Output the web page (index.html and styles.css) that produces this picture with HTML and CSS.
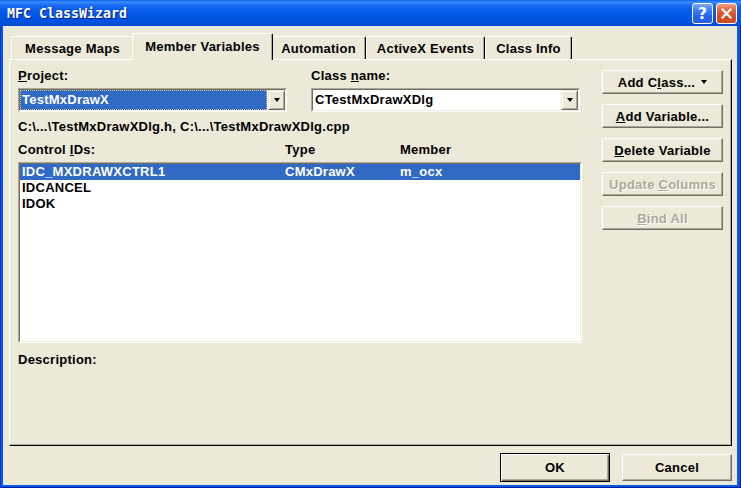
FILE: index.html
```html
<!DOCTYPE html>
<html>
<head>
<meta charset="utf-8">
<title>MFC ClassWizard</title>
<link rel="stylesheet" href="styles.css">
</head>
<body>
<div class="window">
  <div class="titlebar">
    <span class="title">MFC ClassWizard</span>
    <div class="caption-btns">
      <div class="cbtn help">?</div>
      <div class="cbtn close">
        <svg width="11" height="11" viewBox="0 0 11 11"><path d="M1.5 1.5 L9.5 9.5 M9.5 1.5 L1.5 9.5" stroke="#fff" stroke-width="2.2" stroke-linecap="square"/></svg>
      </div>
    </div>
  </div>
  <div class="client">
    <div class="tabs">
      <div class="tab t-maps">Message Maps</div>
      <div class="tab t-vars selected">Member Variables</div>
      <div class="tab t-auto">Automation</div>
      <div class="tab t-events">ActiveX Events</div>
      <div class="tab t-info">Class Info</div>
    </div>
    <div class="panel">
      <div class="main">
        <div class="combos">
          <div class="field">
            <div class="label"><u>P</u>roject:</div>
            <div class="combo">
              <div class="combo-in">
                <div class="combo-text focused">TestMxDrawX</div>
                <div class="drop"><span class="arrow"></span></div>
              </div>
            </div>
          </div>
          <div class="field">
            <div class="label">Class <u>n</u>ame:</div>
            <div class="combo">
              <div class="combo-in">
                <div class="combo-text">CTestMxDrawXDlg</div>
                <div class="drop"><span class="arrow"></span></div>
              </div>
            </div>
          </div>
        </div>
        <div class="path">C:\...\TestMxDrawXDlg.h, C:\...\TestMxDrawXDlg.cpp</div>
        <div class="head">
          <span>Control <u>I</u>Ds:</span><span>Type</span><span>Member</span>
        </div>
        <div class="list">
          <div class="list-in">
            <div class="row sel"><span>IDC_MXDRAWXCTRL1</span><span>CMxDrawX</span><span>m_ocx</span></div>
            <div class="row"><span>IDCANCEL</span><span></span><span></span></div>
            <div class="row"><span>IDOK</span><span></span><span></span></div>
          </div>
        </div>
        <div class="desc">Description:</div>
      </div>
      <div class="side">
        <div class="btn"><span>Add C<u>l</u>ass...</span><span class="arrow"></span></div>
        <div class="btn"><span><u>A</u>dd Variable...</span></div>
        <div class="btn"><span><u>D</u>elete Variable</span></div>
        <div class="btn disabled"><span>Update <u>C</u>olumns</span></div>
        <div class="btn disabled"><span><u>B</u>ind All</span></div>
      </div>
    </div>
    <div class="footer">
      <div class="btn default"><span>OK</span></div>
      <div class="btn cancel"><span>Cancel</span></div>
    </div>
  </div>
</div>
</body>
</html>
```

FILE: styles.css
```css
html, body {
  margin: 0;
  padding: 0;
  background: #0055e5;
}

body {
  font-family: "Liberation Sans", Arial, sans-serif;
  font-weight: bold;
  font-size: 13px;
  letter-spacing: 0.25px;
  color: #000;
}

u {
  text-decoration: underline;
  text-underline-offset: 1px;
}

.window {
  width: 741px;
  height: 488px;
  box-sizing: border-box;
  display: flex;
  flex-direction: column;
  background: #0a58e6;
  box-shadow: inset 1px 0 #0831d9, inset -1px 0 #001ea0, inset 0 -1px #001ea0;
  overflow: hidden;
}

.titlebar {
  flex: none;
  height: 26px;
  display: flex;
  align-items: center;
  justify-content: space-between;
  padding: 0 4px 0 7px;
  background: linear-gradient(to bottom, #0a5fe8 0px, #3d8cf9 2px, #1a6cf2 5px, #0a5ce9 10px, #0058e6 16px, #0052dd 22px, #0449cf 26px);
}

.title {
  font-family: "DejaVu Sans Mono", "Liberation Mono", monospace;
  font-weight: bold;
  font-size: 13.3px;
  letter-spacing: 0;
  color: #fff;
  text-shadow: 1px 1px 0 #0a1e8c;
}

.caption-btns {
  display: flex;
  gap: 3px;
  padding-top: 1px;
}

.cbtn {
  width: 21px;
  height: 21px;
  box-sizing: border-box;
  border: 1px solid #fff;
  border-radius: 3px;
  display: flex;
  align-items: center;
  justify-content: center;
}

.help {
  background: linear-gradient(to bottom, #7aa8fa 0%, #3c7cf1 35%, #2461e6 70%, #2a63e0 100%);
  color: #fff;
  font-family: "DejaVu Sans", sans-serif;
  font-size: 16px;
  font-weight: bold;
  letter-spacing: 0;
  line-height: 1;
}

.close {
  background: linear-gradient(to bottom, #f0a080 0%, #e2603a 35%, #d64a20 70%, #cc4a22 100%);
}

.client {
  flex: 1;
  margin: 0 4px 3px 3px;
  background: #ece9d8;
  padding: 7px 5px 0 6px;
  display: flex;
  flex-direction: column;
}

.tabs {
  height: 26px;
  display: flex;
  align-items: flex-end;
  padding-left: 2px;
}

.tab {
  height: 23px;
  box-sizing: border-box;
  display: flex;
  align-items: center;
  justify-content: center;
  background: #ece9d8;
  border-top: 1px solid #fff;
  border-left: 1px solid #fff;
  border-right: 1px solid #000;
  border-radius: 2px 2px 0 0;
  box-shadow: inset -1px 0 #aca899;
  white-space: nowrap;
}

.t-maps { width: 123px; }
.t-vars { width: 137px; }
.t-auto { width: 95px; }
.t-events { width: 119px; }
.t-info { width: 87px; }

.tab.selected {
  position: relative;
  z-index: 1;
  width: 141px;
  height: 27px;
  margin: 0 -2px -1px;
  padding-bottom: 1px;
}

.panel {
  height: 387px;
  box-sizing: border-box;
  border: 1px solid;
  border-color: #fff #000 #000 #fff;
  box-shadow: inset -1px -1px #aca899;
  display: flex;
  gap: 20px;
  padding: 9px 8px 0 8px;
}

.main {
  width: 564px;
  display: flex;
  flex-direction: column;
}

.combos {
  display: grid;
  grid-template-columns: 269px 269px;
  column-gap: 24px;
}

.label {
  height: 14px;
  line-height: 14px;
  margin-bottom: 5px;
  white-space: nowrap;
}

.combo {
  height: 24px;
  box-sizing: border-box;
  border: 1px solid;
  border-color: #aca899 #fff #fff #aca899;
}

.combo-in {
  height: 100%;
  box-sizing: border-box;
  border: 1px solid;
  border-color: #716f64 #f1efe2 #f1efe2 #716f64;
  background: #fff;
  display: flex;
}

.combo-text {
  flex: 1;
  line-height: 20px;
  padding-left: 2px;
  margin-right: 1px;
  white-space: nowrap;
}

.combo-text.focused {
  background: #316ac5;
  color: #fff;
  outline: 1px dotted #cfc58a;
  outline-offset: -1px;
}

.drop {
  width: 17px;
  box-sizing: border-box;
  background: #ece9d8;
  border: 1px solid;
  border-color: #ece9d8 #716f64 #716f64 #ece9d8;
  box-shadow: inset 1px 1px #fff, inset -1px -1px #aca899;
  display: flex;
  align-items: center;
  justify-content: center;
}

.arrow {
  width: 0;
  height: 0;
  border-left: 3.5px solid transparent;
  border-right: 3.5px solid transparent;
  border-top: 4px solid #000;
}

.path {
  margin-top: 8px;
  height: 14px;
  line-height: 14px;
  white-space: nowrap;
}

.head {
  margin-top: 9px;
  height: 14px;
  line-height: 14px;
  display: grid;
  grid-template-columns: 267px 115px 1fr;
}

.list {
  margin-top: 5px;
  height: 181px;
  box-sizing: border-box;
  border: 1px solid;
  border-color: #aca899 #fff #fff #aca899;
}

.list-in {
  height: 100%;
  box-sizing: border-box;
  border: 1px solid;
  border-color: #716f64 #f1efe2 #f1efe2 #716f64;
  background: #fff;
}

.row {
  height: 16px;
  line-height: 16px;
  padding-left: 2px;
  display: grid;
  grid-template-columns: 263px 115px 1fr;
  white-space: nowrap;
}

.row.sel {
  background: #316ac5;
  color: #fff;
}

.desc {
  margin-top: 10px;
  height: 14px;
  line-height: 14px;
}

.side {
  width: 121px;
  display: flex;
  flex-direction: column;
  gap: 10px;
  padding-top: 1px;
}

.btn {
  height: 24px;
  box-sizing: border-box;
  background: #ece9d8;
  border: 1px solid;
  border-color: #fff #716f64 #716f64 #fff;
  box-shadow: inset -1px -1px #aca899;
  display: flex;
  align-items: center;
  justify-content: center;
  gap: 6px;
  white-space: nowrap;
}

.btn.disabled {
  color: #aca899;
  text-shadow: 1px 1px 0 #fff;
}

.footer {
  margin-top: 7px;
  height: 29px;
  display: flex;
  align-items: center;
  justify-content: flex-end;
  gap: 12px;
}

.btn.default {
  width: 110px;
  height: 29px;
  border: 1px solid #000;
  box-shadow: inset 1px 1px #fff, inset -1px -1px #716f64, inset -2px -2px #aca899;
}

.btn.cancel {
  width: 110px;
  height: 27px;
}
```
